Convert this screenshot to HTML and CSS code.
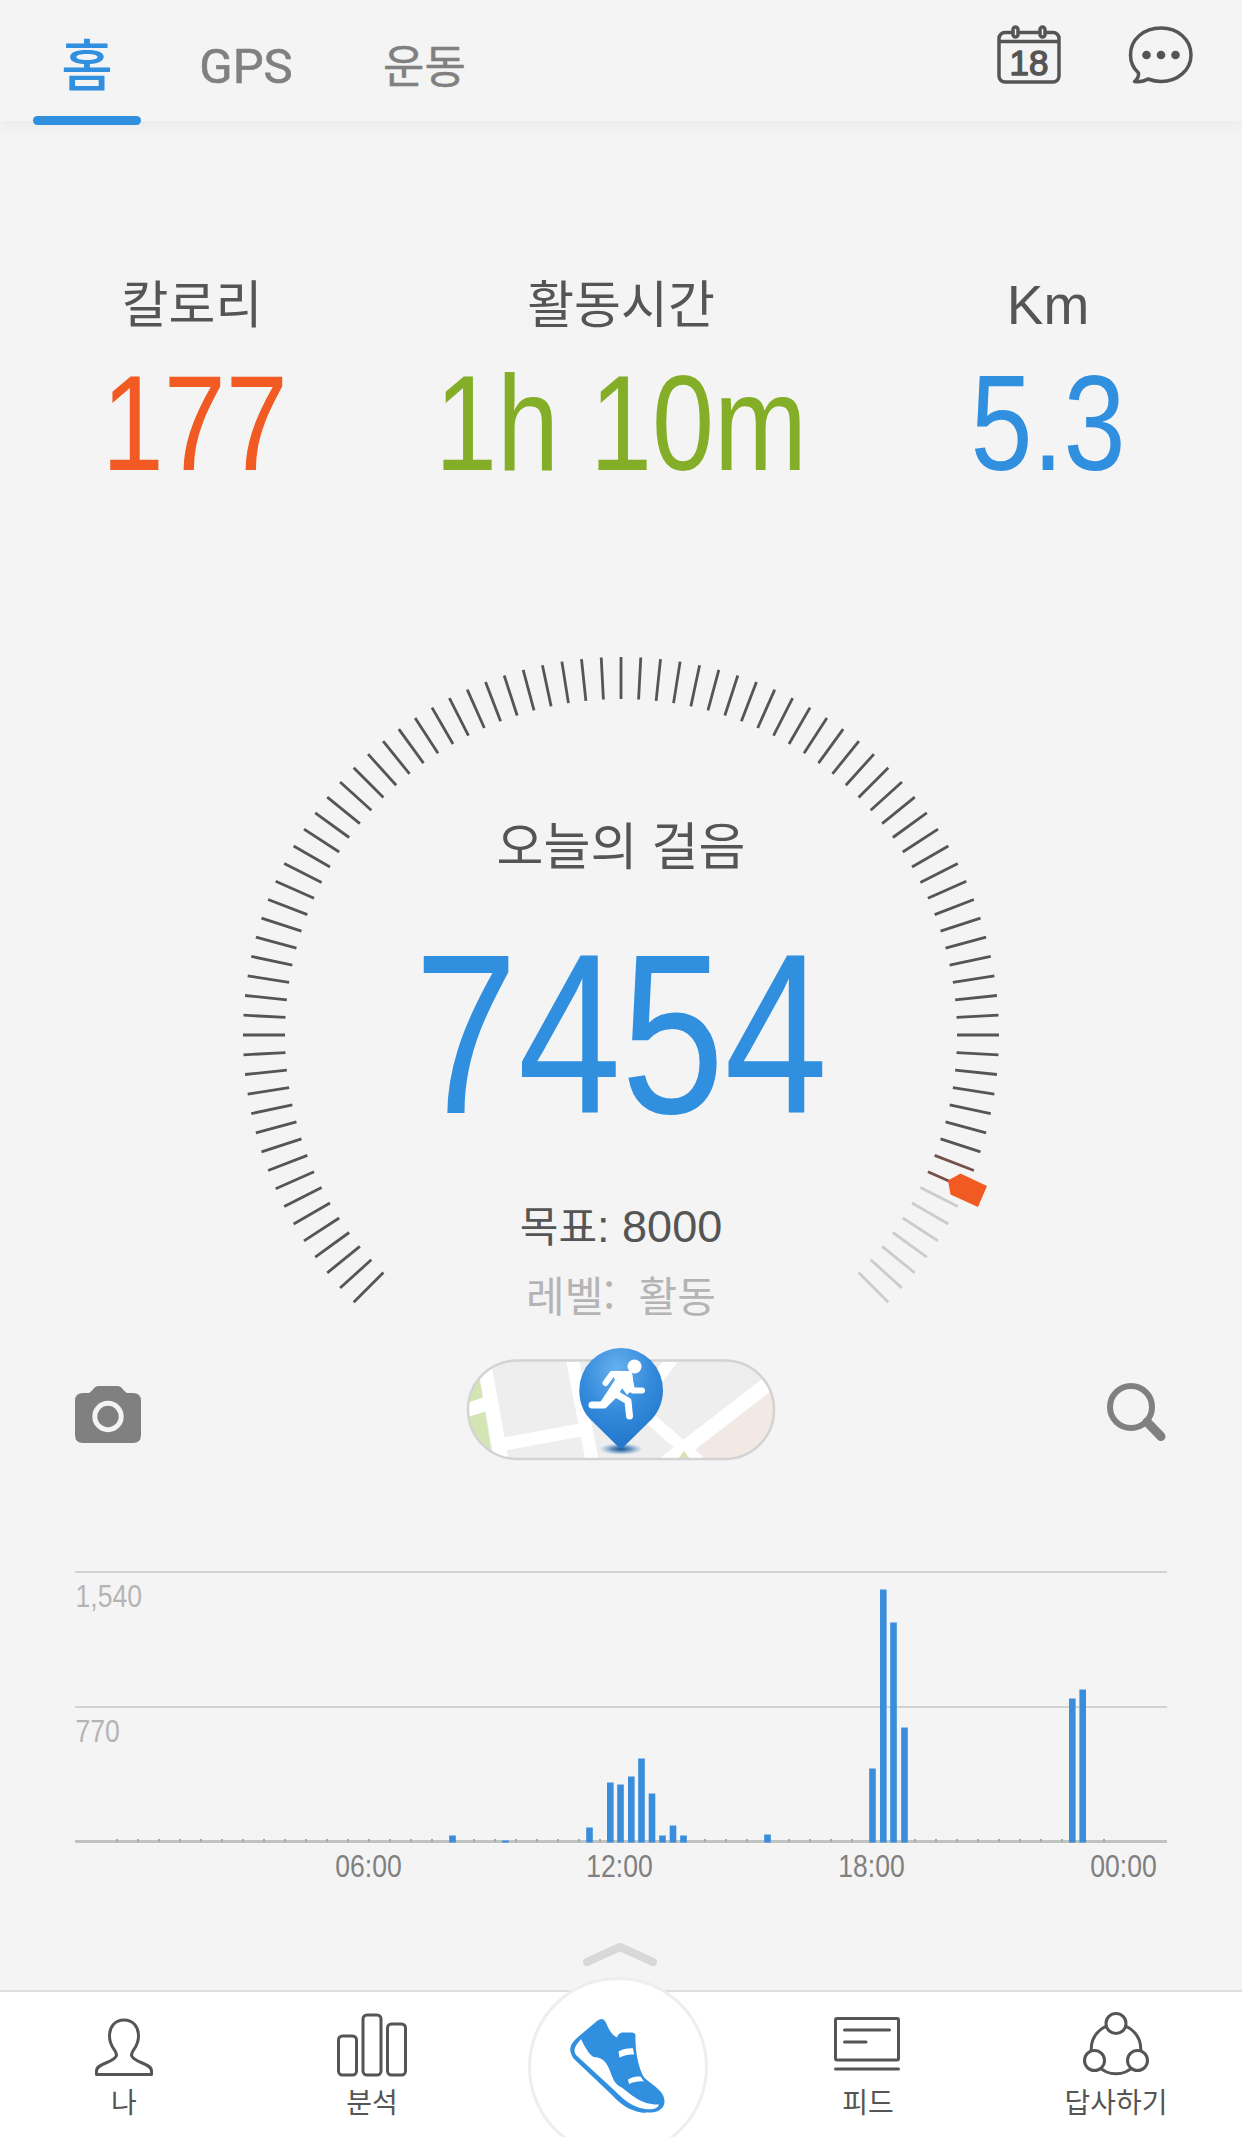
FILE: index.html
```html
<!DOCTYPE html>
<html lang="ko">
<head>
    <meta charset="UTF-8">
    <meta name="viewport" content="width=device-width, initial-scale=1.0">
    <title>오늘의 걸음</title>
    <link rel="stylesheet" href="styles.css">
</head>
<body>
    <header>
        <nav class="tabs">
            <a class="tab active">홈</a>
            <a class="tab gps">GPS</a>
            <a class="tab workout">운동</a>
        </nav>
        <div class="header-icons">
            <svg class="line-icon" width="64" height="62" viewBox="0 0 64 62">
                <rect x="2" y="8.500" width="60" height="49.500" rx="6"/>
                <path d="M2 17.500H62"/>
                <rect class="ring" x="16" y="3" width="5" height="10" rx="2.500"/>
                <rect class="ring" x="43" y="3" width="5" height="10" rx="2.500"/>
                <text class="day" x="32" y="51" text-anchor="middle">18</text>
            </svg>
            <svg class="line-icon" width="66" height="62" viewBox="0 0 66 62">
                <path d="M10.500 49C5 44 2.500 38 2.500 31C2.500 15 16 4 33 4C50 4 63 15.500 63 31C63 46 49.500 57.500 33 57.500C28 57.500 24 56.500 20 55C16 57.500 11 58 6.500 57.500C9.500 55 11 52 10.500 49Z"/>
                <g class="dots"><circle cx="18.500" cy="31" r="4.300"/><circle cx="33" cy="31" r="4.300"/><circle cx="47.500" cy="31" r="4.300"/></g>
            </svg>
        </div>
    </header>

    <section class="stats">
        <div class="stat">
            <div class="stat-label">칼로리</div>
            <div class="stat-value orange">177</div>
        </div>
        <div class="stat">
            <div class="stat-label">활동시간</div>
            <div class="stat-value green">1h 10m</div>
        </div>
        <div class="stat last">
            <div class="stat-label km">Km</div>
            <div class="stat-value blue">5.3</div>
        </div>
    </section>

    <section class="gauge">
        <svg class="gauge-ring" width="756" height="676" viewBox="0 0 756 676">
            <g id="ticks"></g>
            <path fill="#f15a22" d="M327 145.500L339.500 138.500L366 151L357 172L329.500 159.500Z" transform="translate(378 378)"/>
        </svg>
        <div class="gauge-title">오늘의 걸음</div>
        <div class="gauge-steps">7454</div>
        <div class="gauge-goal"><span class="ko">목표</span>: 8000</div>
        <div class="gauge-level">레벨:&nbsp; 활동</div>
    </section>

    <section class="tools">
        <svg class="camera" width="66" height="57" viewBox="0 0 66 57">
            <path fill="#808080" d="M8 7H13C15 7 16 5.500 17.500 4C19.500 1.500 21 0 24 0H42C45 0 46.500 1.500 48.500 4C50 5.500 51 7 53 7H58Q66 7 66 15V49Q66 57 58 57H8Q0 57 0 49V15Q0 7 8 7Z"/>
            <circle cx="33" cy="30.500" r="13.200" fill="none" stroke="#f4f4f4" stroke-width="5"/>
        </svg>
        <svg class="map" width="312" height="118" viewBox="0 0 312 118">
            <defs>
                <clipPath id="pill"><rect x="3" y="14" width="306" height="98" rx="49"/></clipPath>
                <radialGradient id="pin" cx="45%" cy="22%" r="75%">
                    <stop offset="0" stop-color="#68b1ee"/>
                    <stop offset=".55" stop-color="#348bdc"/>
                    <stop offset="1" stop-color="#2377cb"/>
                </radialGradient>
                <radialGradient id="shade">
                    <stop offset="0" stop-color="#164d86"/>
                    <stop offset=".45" stop-color="#3d79b2" stop-opacity=".75"/>
                    <stop offset="1" stop-color="#6fa3d4" stop-opacity="0"/>
                </radialGradient>
            </defs>
            <g clip-path="url(#pill)">
                <rect width="312" height="118" fill="#eee"/>
                <path fill="#d4e5b4" d="M0 0H10L28 116H0Z"/>
                <path fill="#f3e9e4" d="M222 92L305 30H312V118H250Z"/>
                <g fill="none" stroke="#fff">
                    <path stroke-width="14" d="M18 10L37 116M-4 65L24 56"/>
                    <path stroke-width="13" d="M34 98L121 82"/>
                    <path stroke-width="13" d="M107 10L128 118"/>
                    <path stroke-width="15" d="M312 30L198 118"/>
                    <path stroke-width="12" d="M180 67L238 118M184 42L209 10"/>
                </g>
                <path fill="#d4e5b4" d="M213 112L219 104L225 112Z"/>
            </g>
            <rect x="3" y="13.500" width="306" height="98.500" rx="49" fill="none" stroke="#d3d3d3" stroke-width="2.400"/>
            <ellipse cx="156" cy="102" rx="22" ry="6" fill="url(#shade)"/>
            <path fill="url(#pin)" d="M156 102.500L125 72C117.500 64 114.300 54 114.300 43A41.800 42 0 0 1 198 43C198 54 194 64 187 72Z"/>
            <circle cx="169.500" cy="19.500" r="7" fill="#fff"/>
            <path fill="#fff" d="M146 24H163Q167 24 167.500 28L169 41L162 48L157 41L152 49L139 60L134 57L150 33Z"/>
            <g fill="none" stroke="#fff" stroke-linecap="round" stroke-linejoin="round">
                <path stroke-width="6" d="M140.500 36L147 27H160M164 32L167.500 43.500H177"/>
                <path stroke-width="7" d="M157 34L149 48L139 58H127M151 47L163 54L164.500 69"/>
            </g>
        </svg>
        <svg class="search" width="60" height="60" viewBox="0 0 60 60">
            <circle cx="24" cy="24" r="21" fill="none" stroke="#808080" stroke-width="6"/>
            <path d="M40 39L54 53.500" stroke="#808080" stroke-width="9" stroke-linecap="round"/>
        </svg>
    </section>

    <svg class="chart" width="1092" height="320" viewBox="0 0 1092 320">
        <path class="grid" d="M0 2H1092M0 137H1092"/>
        <path class="axis" d="M0 271.500H1092"/>
        <g id="axisTicks"></g>
        <g id="bars"></g>
        <g class="y-label">
            <text transform="translate(.5 36.500) scale(.83 1)">1,540</text>
            <text transform="translate(.5 171.500) scale(.83 1)">770</text>
        </g>
        <g class="x-label">
            <text transform="translate(293.500 306.500) scale(.83 1)">06:00</text>
            <text transform="translate(544.500 306.500) scale(.83 1)">12:00</text>
            <text transform="translate(796.500 306.500) scale(.83 1)">18:00</text>
            <text transform="translate(1048.500 306.500) scale(.83 1)">00:00</text>
        </g>
    </svg>

    <svg class="chevron" width="76" height="30" viewBox="0 0 76 30">
        <path d="M5 20L38 5L71 20"/>
    </svg>

    <footer>
        <a class="item">
            <svg class="nav-icon" width="70" height="66" viewBox="0 0 70 66">
                <path d="M7.500 62.500V59C7.500 51 25 51 27.500 43.500C28 38 20.500 36 20.500 24C20.500 14 26.500 8 35 8C43.500 8 49.500 14 49.500 24C49.500 36 42 38 42.500 43.500C45 51 62.500 51 62.500 59V62.500Z"/>
            </svg>
            나
        </a>
        <a class="item">
            <svg class="nav-icon" width="70" height="66" viewBox="0 0 70 66">
                <rect x="1.500" y="24" width="18" height="39" rx="4"/>
                <rect x="26" y="3" width="18" height="60" rx="4"/>
                <rect x="50.500" y="12" width="18" height="51" rx="4"/>
            </svg>
            분석
        </a>
        <a class="item">
            <span class="shoe-button">
                <svg width="100" height="100" viewBox="0 0 100 100">
                    <path fill="#318fdf" d="M3.400 33C3.400 28 7 25 11 21L30 5Q35 1 38 5C41 10 42 17 50 21.500C51 18 53 16.500 57 16.500H64Q68.500 16 68.500 20C68 34 71 51 77 61.500C85 69 98 75 97.500 86C97 94 89 97 80.500 96.500C66 95 56 89 46.500 78L9 44Q3.400 38 3.400 33Z"/>
                    <path fill="#318fdf" d="M9 25C2 30 2 36 7 43L45 79C56 91 66 96 79 97L60 70Z"/>
                    <path fill="#fff" d="M14 23C18 31 21 37 26.500 41Q32 41 36 44C45 51 43 66 54 71C65 79 74 89 92 88.500C91 93 84 94 78 93C64 91 55 82 47 74L9 39C5 33 10 28 14 23Z"/>
                    <path fill="#fff" d="M51.500 35.500C56 33 61 32 66 32.300L67 38.500C62 38.500 58 39 52.500 41.500ZM61 63.500C65 61 69 60.500 73.500 60.500L77 65.500C71 65 67 66 62 68Z"/>
                </svg>
            </span>
        </a>
        <a class="item">
            <svg class="nav-icon" width="70" height="66" viewBox="0 0 70 66">
                <rect x="2.500" y="6.500" width="63" height="41.500" rx="1.500"/>
                <path d="M2.500 57H65.500M11.500 18H56.500M11.500 30H33"/>
            </svg>
            피드
        </a>
        <a class="item">
            <svg class="nav-icon" width="70" height="66" viewBox="0 0 70 66">
                <circle cx="35" cy="37" r="24.800"/>
                <g fill="#fff"><circle cx="35" cy="11.500" r="10"/><circle cx="13.500" cy="48.500" r="10"/><circle cx="56.500" cy="48.500" r="10"/></g>
            </svg>
            답사하기
        </a>
    </footer>

    <script src="script.js"></script>
</body>
</html>
```
FILE: styles.css
```css
* { box-sizing: border-box; }
body { display: flex; flex-direction: column; width: 1242px; height: 2137px; margin: 0; overflow: hidden; background: #f4f4f4; color: #555; font-family: "Noto Sans CJK KR", sans-serif; }
svg { display: block; flex: none; }

header { display: flex; justify-content: space-between; flex: none; height: 121px; padding: 0 48px 0 33px; box-shadow: 0 6px 16px rgba(0,0,0,.045); }
.tabs { display: flex; }
.tab { height: 125px; line-height: 128px; text-align: center; font-size: 45px; color: #808080; }
.active { width: 108px; font-size: 56px; line-height: 124px; font-weight: 500; color: #318fdf; }
.active::after { content: ""; display: block; height: 9px; margin-top: -8px; border-radius: 5px; background: #318fdf; }
.gps { width: 210px; line-height: 134px; font-family: Roboto, sans-serif; font-size: 49px; -webkit-text-stroke: .6px #808080; }
.workout { width: 147px; -webkit-text-stroke: .4px #808080; }
.header-icons { display: flex; gap: 67px; padding-top: 24px; }
.line-icon { fill: none; stroke: #555; stroke-width: 3.5; stroke-linejoin: round; }
.ring { fill: #f4f4f4; }
.day { fill: #555; stroke: #555; stroke-width: 1.4; font: 35px "Liberation Sans", sans-serif; }
.dots { fill: #555; stroke: none; }

.stats { display: grid; grid-template-columns: 384px 474px 384px; flex: none; padding-top: 150px; text-align: center; }
.stat-label { height: 60px; line-height: 60px; font-size: 51px; }
.km { line-height: 69px; font-family: "Liberation Sans", sans-serif; font-size: 55px; }
.stat-value { margin-top: 32px; line-height: 120px; font-family: "Liberation Sans", sans-serif; font-size: 136px; white-space: nowrap; transform: scaleX(.82); }
.orange { padding-left: 7px; }
.last { margin-right: 4px; }
.orange { color: #f15a22; }
.green { color: #84ae28; }
.blue { color: #318fdf; }

.gauge { position: relative; flex: none; width: 756px; height: 676px; margin: 174px auto 0; padding-top: 156px; text-align: center; }
.gauge-ring { position: absolute; top: 0; left: 0; }
.gauge-title { line-height: 60px; font-size: 51px; }
.gauge-steps { margin-top: 61px; line-height: 200px; font-family: "Liberation Sans", sans-serif; font-size: 228px; color: #318fdf; transform: scaleX(.815); }
.gauge-goal { margin-top: 63px; line-height: 60px; font-family: "Liberation Sans", sans-serif; font-size: 45px; white-space: nowrap; }
.ko { font-family: "Noto Sans CJK KR", sans-serif; font-size: 42px; line-height: 1; }
.gauge-level { margin-top: 7px; line-height: 60px; font-size: 42px; color: #b4b4b4; }

.tools { display: grid; grid-template-columns: 1fr auto 1fr; flex: none; height: 118px; margin-top: 14px; padding: 0 75px; }
.camera { margin-top: 39px; }
.search { justify-self: end; margin-top: 36px; }

.chart { margin: 105px 0 0 75px; }
.grid { stroke: #d3d3d3; stroke-width: 2; }
.axis { stroke: #bfc3c2; stroke-width: 3; }
.axis-tick { fill: #a5a9a8; }
.bar { fill: #3a8ddb; }
.y-label, .x-label { font: 32px "Liberation Sans", sans-serif; }
.y-label { fill: #b4b4b4; }
.x-label { fill: #808080; text-anchor: middle; }

.chevron { margin: 52px 0 0 582px; }
.chevron path { fill: none; stroke: #d8d8d8; stroke-width: 8; stroke-linecap: round; stroke-linejoin: round; }

footer { display: grid; grid-template-columns: repeat(5, 1fr); flex: none; height: 147px; margin-top: auto; padding-right: 2px; background: #fff; border-top: 2px solid #dfdfdf; }
.item { position: relative; padding-top: 20px; text-align: center; font-size: 28px; line-height: 36px; }
.nav-icon { margin: 0 auto 5px; fill: none; stroke: #555; stroke-width: 3; stroke-linecap: round; stroke-linejoin: round; }
.shoe-button { position: absolute; top: -15px; left: 32px; display: flex; width: 180px; height: 180px; padding: 36px 0 0 36px; border: 3px solid #eee; border-radius: 50%; background: #fff; }
```
FILE: script.js
```js
const SVG = "http://www.w3.org/2000/svg";

function add(parent, name, attrs) {
    const el = document.createElementNS(SVG, name);
    for (const key in attrs) el.setAttribute(key, attrs[key]);
    document.getElementById(parent).appendChild(el);
}

// gauge: one tick every 3 degrees, -135 to 135
for (let a = -135; a <= 135; a += 3) {
    let color = "#555";
    if (a > 116) color = "#ccc";
    else if (a > 110) color = "#74504a";
    add("ticks", "path", { d: "M378 0V42", stroke: color, "stroke-width": 2.8, transform: `rotate(${a} 378 378)` });
}

for (let i = 0; i < 48; i++) {
    add("axisTicks", "rect", { class: "axis-tick", x: 41 + i * 21, y: 269, width: 2, height: 3 });
}

// [x, height]
const bars = [
    [374.5, 7], [427.5, 2], [511.5, 15], [532.3, 60], [542.5, 58], [553.3, 66], [563.5, 84], [574, 49],
    [584.5, 7], [595, 17], [605.5, 7], [689.5, 8], [794.5, 74], [805.3, 253], [815.5, 220], [826.5, 115],
    [994.3, 144], [1004.7, 153]
];
bars.forEach(([x, h]) => add("bars", "rect", { class: "bar", x: x - .3, y: 272.5 - h, width: 6.6, height: h }));
```
